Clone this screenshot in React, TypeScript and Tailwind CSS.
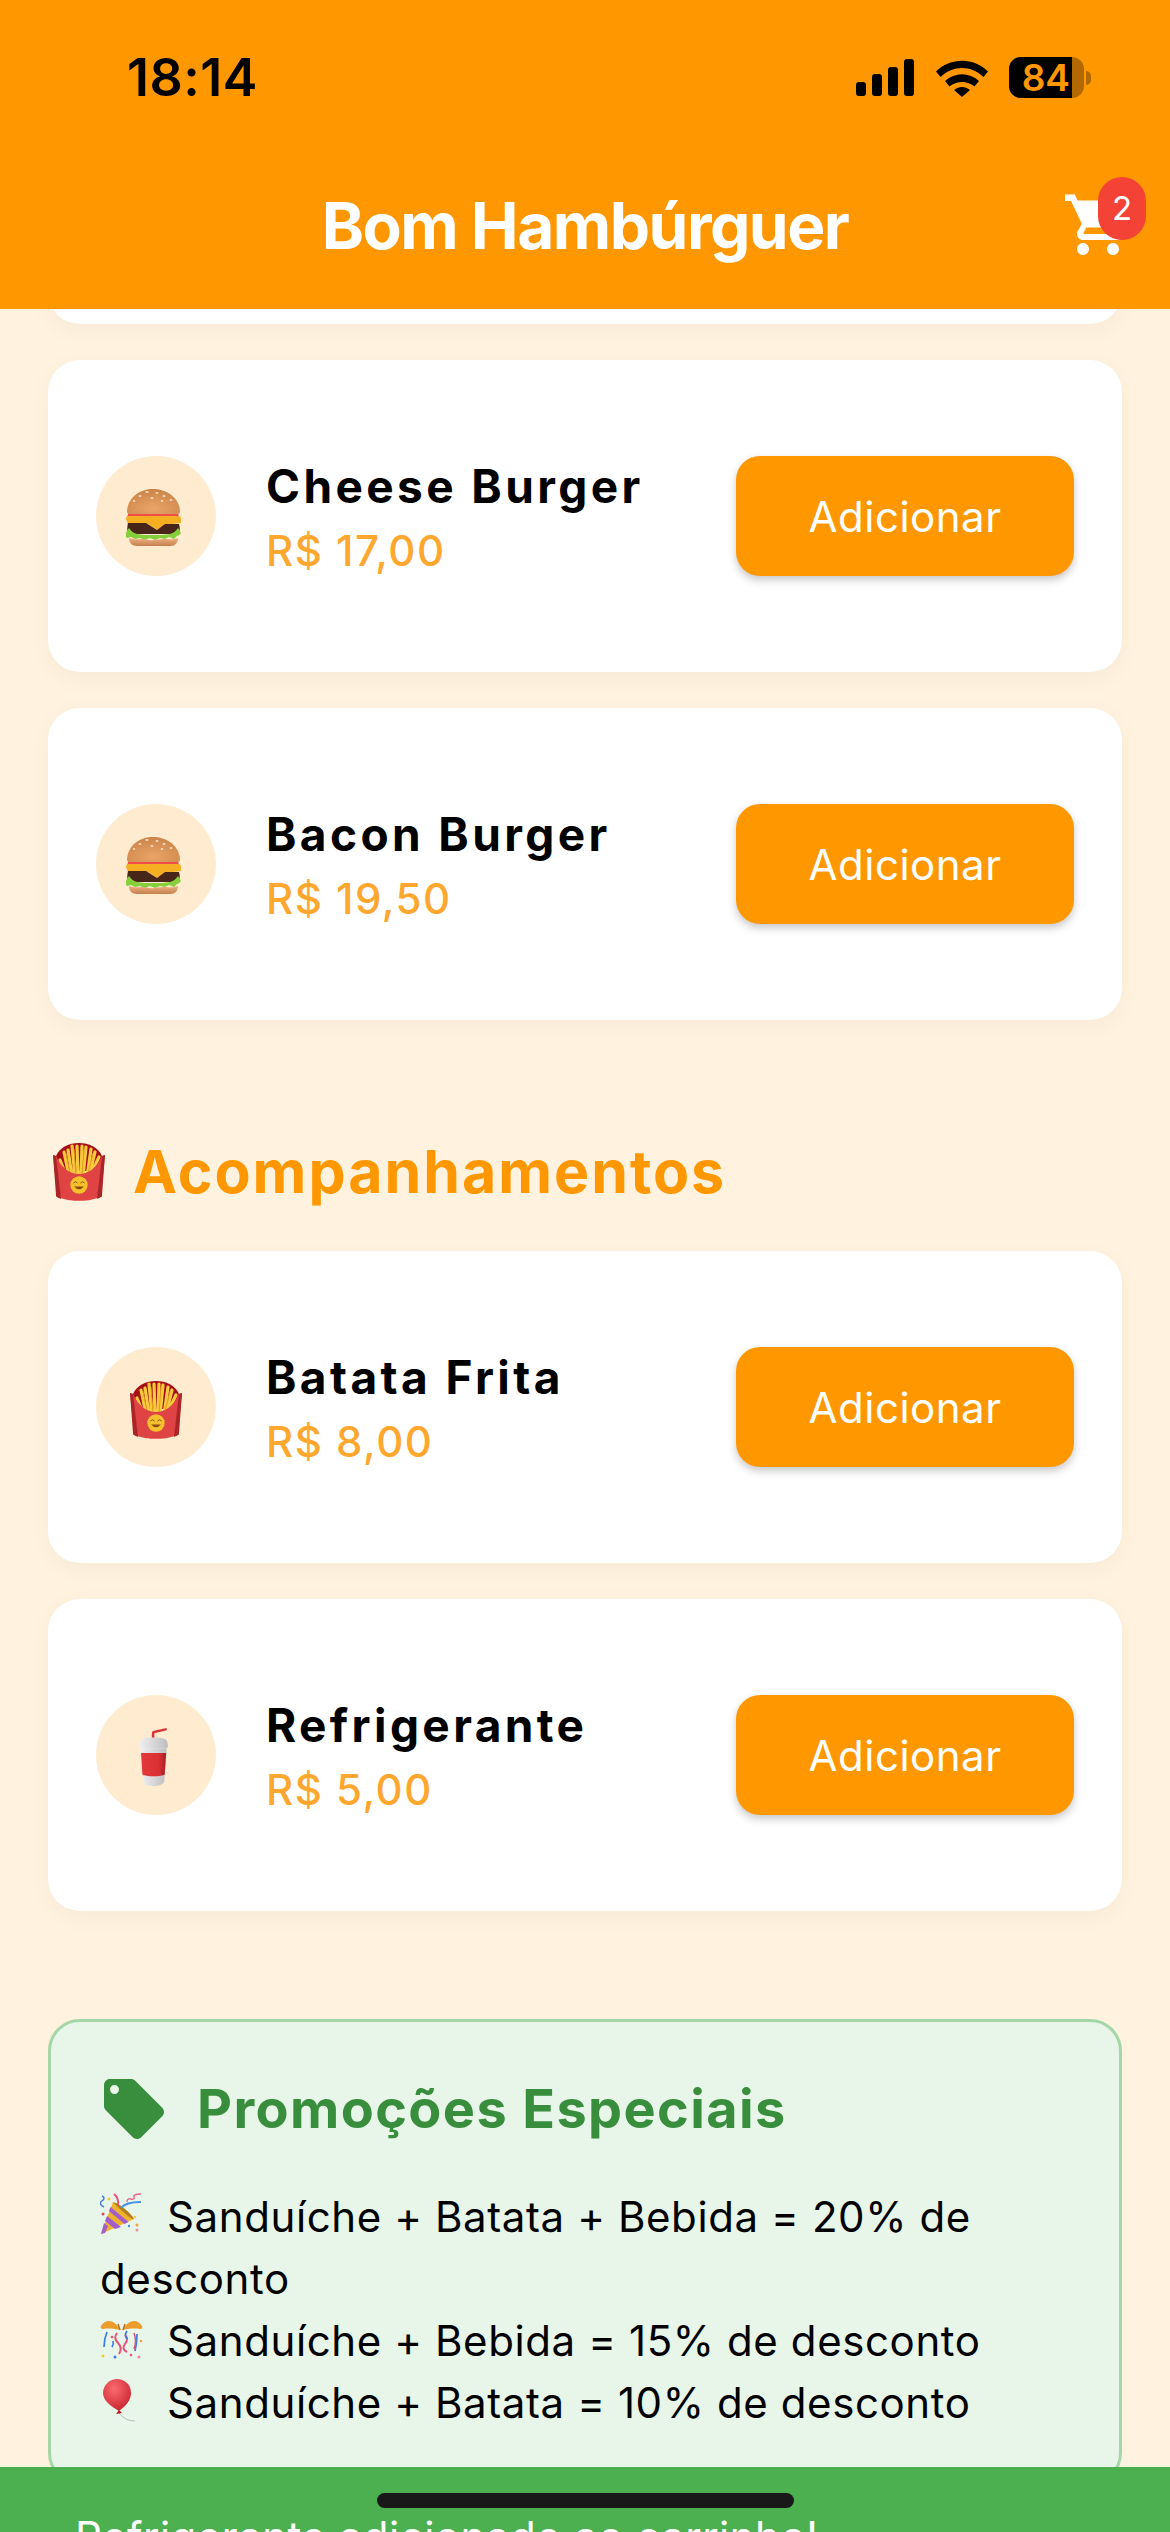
import React from "react";

function Burger() {
  return (
    <svg width="60" height="60" viewBox="0 0 60 60">
      <defs>
        <radialGradient id="bun" cx="0.5" cy="0.75" r="0.8">
          <stop offset="0" stopColor="#eaa468" />
          <stop offset="1" stopColor="#c98246" />
        </radialGradient>
        <linearGradient id="low" x1="0" y1="0" x2="0" y2="1">
          <stop offset="0" stopColor="#eeb183" />
          <stop offset="1" stopColor="#c77f4c" />
        </linearGradient>
      </defs>
      <path d="M1 25C2 11 14 3 27 3s26 8 27 22c0 3-2 4-5 4H6c-3 0-5-1-5-4z" fill="url(#bun)" />
      <g fill="#f3dcc0">
        <ellipse cx="21" cy="6" rx="1.700" ry="1" /><ellipse cx="31" cy="7" rx="1.500" ry="1" /><ellipse cx="14" cy="10" rx="1.500" ry="1" /><ellipse cx="26" cy="12" rx="1.500" ry="1" /><ellipse cx="38" cy="10" rx="1.500" ry="1" /><ellipse cx="45" cy="14" rx="1.300" ry="1" /><ellipse cx="8" cy="15" rx="1.200" ry="0.900" /><ellipse cx="36" cy="15" rx="1.300" ry="1" />
      </g>
      <path d="M2 28h50l1.500 4H1z" fill="#ef4d4a" />
      <path d="M0 33c0-2 1-3 3-3h49c2 0 3 1 3 3v4l-8 1H40l-9 6-9-6H2z" fill="#f6ae22" />
      <path d="M2 37h18l11 7 8-6h14c1 3 1 7 0 10H2c-1-3-1-7 0-11z" fill="#472619" />
      <path d="M0 47c1-2 2-4 3-5 2 3 4 5 8 6 5 1 10 1 16 1s12 0 17-1c4-1 6-3 8-6 1 1 2 3 3 5-1 2-3 3-4 3l-3 3-5-2-4 2-5-1-5 2-5-2-5 2-5-2-5 1-4-2-4 1-2-2c-2 0-3-1-4-3z" fill="#86cf3c" />
      <path d="M3 52c6 2 9 1 13 1s8 2 12 1 9-1 12-1 8 1 12-1c0 5-3 8-8 8H11c-5 0-8-3-8-8z" fill="url(#low)" />
    </svg>
  );
}

function Fries() {
  return (
    <svg width="52" height="58" viewBox="0 0 52 58" className="mt-[6px]">
      <path d="M3 13C7 4 16 0 26 0s19 4 23 13l-3 15H6z" fill="#a50f14" />
      <g stroke="#f8c83e" strokeWidth="3.200" strokeLinecap="round">
        <path d="M7 17l6 15M11 9l5 24M15 7l4 26M19 3l3 30M24 3l1 30M29 3l-1 30M33 4l-3 30M38 6l-4 28M42 9l-6 24M46 14l-9 19" />
      </g>
      <g stroke="#e09b1e" strokeWidth="1">
        <path d="M13 10l4 20M21 6l2 26M31 6l-2 26M40 10l-5 21" />
      </g>
      <path d="M0 12l3 1c5 11 13 18 23 18s18-7 23-18l3-1-4 40c0 2-1 3-3 3l-8 2c-3 1-19 1-22 0l-8-2c-2 0-3-1-3-3z" fill="#e04343" />
      <path d="M0 12l3 1 5 43-4-2c-1 0-1-1-1-2zM52 12l-3 1-5 43 4-2c1 0 1-1 1-2z" fill="#a92527" />
      <circle cx="26" cy="42" r="8.700" fill="#f6c12d" />
      <path d="M20.500 40q2-2.500 4 0M27.500 40q2-2.500 4 0" stroke="#7a4a10" strokeWidth="0.900" fill="none" />
      <path d="M21 43.500q5 5.500 10 0z" fill="#8a4a10" />
    </svg>
  );
}

function Cup() {
  return (
    <svg width="60" height="60" viewBox="0 0 60 62" className="mt-[1px]">
      <defs>
        <linearGradient id="cupw" x1="0" y1="0" x2="1" y2="0">
          <stop offset="0" stopColor="#f1f1f3" />
          <stop offset="1" stopColor="#bdbdc1" />
        </linearGradient>
        <linearGradient id="cupr" x1="0" y1="0" x2="1" y2="0">
          <stop offset="0" stopColor="#e5393b" />
          <stop offset="0.7" stopColor="#d93034" />
          <stop offset="1" stopColor="#a81f24" />
        </linearGradient>
      </defs>
      <path d="M27 15V8c0-1 .5-2 2-2l11-2.500" stroke="#d8343a" strokeWidth="2.600" fill="none" strokeLinecap="round" />
      <path d="M14 16c1-3 7-4 13.500-4s13 1 14 4l1 4c0 2-1 3-2 3H14c-1 0-2-1-2-3z" fill="url(#cupw)" />
      <path d="M14 23h27l-2.500 34c-.5 3-5 5-11 5s-10-2-10.500-5z" fill="url(#cupw)" />
      <path d="M14.500 28h26l-1.500 22c-3 2.500-20 2.500-23 0z" fill="url(#cupr)" />
    </svg>
  );
}

function Popper() {
  return (
    <svg width="44" height="44" viewBox="0 0 44 44">
      <path d="M1 41L13 9l21 17z" fill="#edb32d" />
      <path d="M1 41l4-1 3-7-4-3zM7 23l14 11-6 2L5 28zM10.500 14l18 15-4 2L9 18z" fill="#a55ccd" />
      <path d="M13 9c6 1 18 11 21 17-1 2-17-12-21-17z" fill="#b57d20" />
      <path d="M21 15c3-4 11-6 20-6" stroke="#4a90e8" strokeWidth="2" fill="none" />
      <path d="M2 3q4 2 0 5t2 6" stroke="#4a7de8" strokeWidth="1.500" fill="none" />
      <path d="M14 1q5 4 4 11" stroke="#e8507a" strokeWidth="2" fill="none" />
      <path d="M27 9q0-4 4-3t3-2 7-3" stroke="#e86a8a" strokeWidth="1.500" fill="none" />
      <circle cx="37" cy="32" r="1.500" fill="#f2a03c" /><circle cx="37" cy="37" r="1.500" fill="#e88aa8" /><circle cx="3" cy="21" r="1.500" fill="#d94a5a" /><circle cx="9" cy="6" r="1.500" fill="#f2c83c" /><circle cx="29" cy="33" r="1.200" fill="#4a90e8" /><circle cx="35" cy="24" r="1.200" fill="#f2c83c" />
    </svg>
  );
}

function ConfettiBall() {
  return (
    <svg width="44" height="44" viewBox="0 0 44 44">
      <path d="M20 13C15 3 6 1 1 9c-1 2 0 3 2 3 6-1 12 0 17 1zM23 13C28 3 37 1 42 9c1 2 0 3-2 3-6-1-13 0-19 1z" fill="#eb9c2d" />
      <path d="M20 13l-2-6M23 13l2-6" stroke="#b8731a" strokeWidth="1.500" />
      <path d="M17 16q-4 5 1 10t1 11M25 18q4 4 0 9t2 8" stroke="#e8507a" strokeWidth="2" fill="none" />
      <path d="M7 15q-3 7-3 15M27 14q-3 4 0 8M37 17q0 9-2 17M13 24q1 3-1 6" stroke="#3a7de8" strokeWidth="1.700" fill="none" />
      <path d="M34 16q3 8 0 16" stroke="#e8507a" strokeWidth="1.500" fill="none" />
      <circle cx="3" cy="39" r="1.500" fill="#f2c83c" /><circle cx="15" cy="40" r="1.500" fill="#3a7de8" /><circle cx="31" cy="38" r="1.300" fill="#e8507a" /><circle cx="39" cy="40" r="1.500" fill="#e88aa8" /><circle cx="12" cy="20" r="1.300" fill="#e8507a" /><circle cx="41" cy="24" r="1.300" fill="#f2a03c" />
    </svg>
  );
}

function Balloon() {
  return (
    <svg width="44" height="44" viewBox="0 0 44 44">
      <defs>
        <radialGradient id="bal" cx="0.4" cy="0.3" r="0.8">
          <stop offset="0" stopColor="#fb6b70" />
          <stop offset="1" stopColor="#c41f2a" />
        </radialGradient>
      </defs>
      <path d="M19 34c5 6 10 8 16 8" stroke="#b9b9b9" strokeWidth="1" fill="none" />
      <path d="M19 32C10 27 3 21 3 14 3 6 10 0 17 0s14 5 14 14c0 7-5 13-12 18z" fill="url(#bal)" />
      <path d="M16 35l3-4 3 3z" fill="#b01c26" />
    </svg>
  );
}

function MenuCard({ name, price, icon }: { name: string; price: string; icon: React.ReactNode }) {
  return (
    <div className="flex items-center rounded-[32px] bg-white px-12 py-24 shadow-[0_6px_24px_rgba(0,0,0,0.04)]">
      <div className="flex h-[120px] w-[120px] shrink-0 items-center justify-center rounded-full bg-[#ffecd0]">{icon}</div>
      <div className="ml-[50px] flex flex-1 flex-col">
        <div className="text-[46px] leading-[58px] font-bold tracking-[3.4px] text-black">{name}</div>
        <div className="mt-[11px] text-[42px] leading-[50px] font-medium tracking-[1.5px] text-[#ffa72e]">{price}</div>
      </div>
      <button className="flex h-[120px] w-[338px] shrink-0 items-center justify-center rounded-[24px] bg-[#ff9800] text-[42px] font-normal tracking-[0.5px] text-white shadow-[0_4px_8px_rgba(0,0,0,0.22)]">
        Adicionar
      </button>
    </div>
  );
}

function PromoLine({ icon, text }: { icon: React.ReactNode; text: string }) {
  return (
    <div>
      <span className="mr-[23px] inline-block h-[44px] w-[44px] translate-y-[5px]">{icon}</span>
      {text}
    </div>
  );
}

export default function App() {
  return (
    <div
      className="relative flex h-[2532px] w-[1170px] flex-col overflow-hidden bg-[#fff3e0]"
      style={{ fontFamily: "Inter, 'Noto Sans', sans-serif" }}
    >
      <header className="relative z-10 flex h-[309px] shrink-0 flex-col bg-[#ff9800]">
        <div className="flex h-[156px] shrink-0 items-start justify-between pt-[54px] pl-[127px] pr-[79px]">
          <span className="text-[52px] leading-[48px] font-semibold tracking-[0.5px] text-black">18:14</span>
          <div className="mt-[3px] flex items-center">
            <svg width="58" height="40" viewBox="0 0 58 40" className="mt-[-2px]">
              <rect x="0" y="25" width="10" height="14" rx="3" fill="#000" />
              <rect x="16" y="17" width="10" height="22" rx="3" fill="#000" />
              <rect x="32" y="10" width="10" height="29" rx="3" fill="#000" />
              <rect x="48" y="2" width="10" height="37" rx="3" fill="#000" />
            </svg>
            <svg width="52" height="38" viewBox="0 0 52 38" className="ml-[22px]">
              <path d="M0 12.500C14-2 38-2 52 12.500l-4.500 5.500C35 6 17 6 4.500 18z" fill="#000" />
              <path d="M9 22c10-9 24-9 34 0l-4.500 5.500c-7-6-18-6-25 0z" fill="#000" />
              <path d="M18 31c5-4 11-4 16 0l-8 7z" fill="#000" />
            </svg>
            <div className="ml-[21px] flex h-[41px] w-[75px] rounded-[12px] bg-black/30">
              <div className="flex h-full w-[63px] items-center justify-end rounded-l-[12px] bg-black pr-[2px] text-[37px] leading-[41px] font-semibold text-[#ff9800]">84</div>
            </div>
            <div className="ml-[2px] h-[14px] w-[5px] rounded-r-full bg-black/30" />
          </div>
        </div>
        <div className="relative flex flex-1 items-start justify-center pt-[26px]">
          <h1 className="text-[64px] leading-[88px] font-bold tracking-[-1.5px] text-white">Bom Hambúrguer</h1>
          <div className="absolute left-[1062px] top-[33px] h-[72px] w-[72px]">
            <svg viewBox="0 0 24 24" width="72" height="72" fill="#fff">
              <path d="M7 18c-1.100 0-1.990.9-1.990 2S5.900 22 7 22s2-.9 2-2-.9-2-2-2zM1 2v2h2l3.600 7.590-1.350 2.450c-.16.28-.25.61-.25.96 0 1.100.9 2 2 2h12v-2H7.420c-.14 0-.25-.11-.25-.25l.03-.12.9-1.830h7.450c.75 0 1.410-.41 1.750-1.030l3.580-6.490c.08-.14.12-.31.12-.48 0-.55-.45-1-1-1H5.210l-.94-2H1zm16 16c-1.100 0-1.990.9-1.990 2s.89 2 1.990 2 2-.9 2-2-.9-2-2-2z" />
            </svg>
          </div>
          <div className="absolute left-[1098px] top-[21px] flex h-[63px] w-[48px] items-center justify-center rounded-[24px] bg-[#f44336] text-[33px] font-normal text-white">2</div>
        </div>
      </header>

      <main className="flex min-h-0 flex-1 flex-col px-12">
        <div className="-mt-[297px] h-[312px] shrink-0 rounded-[32px] bg-white shadow-[0_6px_24px_rgba(0,0,0,0.04)]" />
        <div className="mt-9 flex shrink-0 flex-col gap-9">
          <MenuCard name="Cheese Burger" price="R$ 17,00" icon={<Burger />} />
          <MenuCard name="Bacon Burger" price="R$ 19,50" icon={<Burger />} />
        </div>
        <h2 className="mt-[116px] flex h-[72px] shrink-0 items-center text-[59px] leading-[72px] font-bold tracking-[2px] text-[#ff9800]">
          <span className="ml-[5px] mr-[28px] flex h-[58px] w-[52px] items-center [&>svg]:mt-0"><Fries /></span>
          Acompanhamentos
        </h2>
        <div className="mt-[43px] flex shrink-0 flex-col gap-9">
          <MenuCard name="Batata Frita" price="R$ 8,00" icon={<Fries />} />
          <MenuCard name="Refrigerante" price="R$ 5,00" icon={<Cup />} />
        </div>
        <section className="mt-[108px] shrink-0 rounded-[32px] border-[3px] border-[#a5d6a7] bg-[#e8f5e9] px-[49px] pt-[51px] pb-12">
          <div className="flex items-center">
            <svg viewBox="0 0 24 24" width="72" height="72" fill="#388e3c" className="ml-[-2px]">
              <path d="M21.410 11.580l-9-9C12.050 2.220 11.550 2 11 2H4c-1.100 0-2 .9-2 2v7c0 .55.22 1.050.59 1.420l9 9c.36.36.86.58 1.410.58.55 0 1.050-.22 1.410-.59l7-7c.37-.36.59-.86.59-1.410 0-.55-.23-1.060-.59-1.420zM5.500 7C4.670 7 4 6.330 4 5.500S4.670 4 5.500 4 7 4.670 7 5.500 6.330 7 5.500 7z" />
            </svg>
            <h3 className="ml-[27px] text-[54px] leading-[72px] font-bold tracking-[1.4px] text-[#388e3c]">Promoções Especiais</h3>
          </div>
          <div className="mt-[41px] text-[42px] leading-[62px] font-normal tracking-[0.6px] text-black">
            <PromoLine icon={<Popper />} text="Sanduíche + Batata + Bebida = 20% de desconto" />
            <PromoLine icon={<ConfettiBall />} text="Sanduíche + Bebida = 15% de desconto" />
            <PromoLine icon={<Balloon />} text="Sanduíche + Batata = 10% de desconto" />
          </div>
        </section>
      </main>

      <div className="absolute inset-x-0 bottom-0 z-20 h-[65px] overflow-hidden bg-[#4caf50] pl-[75px] pt-[42px] text-[42px] leading-[56px] tracking-[0.5px] whitespace-nowrap text-white">
        Refrigerante adicionado ao carrinho!
      </div>
      <div className="absolute bottom-[24px] left-[377px] z-30 h-[15px] w-[417px] rounded-full bg-[#191919]" />
    </div>
  );
}
